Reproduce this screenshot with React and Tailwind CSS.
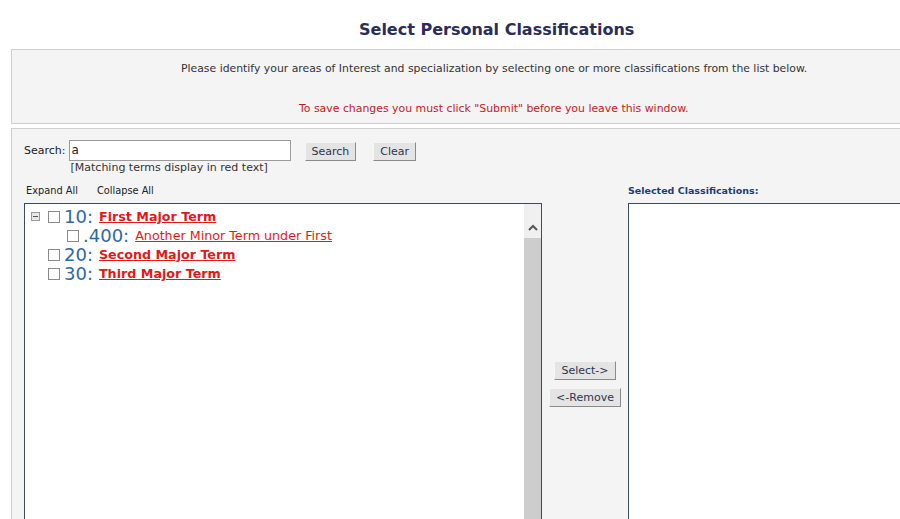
import React from "react";

const terms = [
  { code: "10:", label: "First Major Term", level: 0, toggle: true, bold: true },
  { code: ".400:", label: "Another Minor Term under First", level: 1, bold: false },
  { code: "20:", label: "Second Major Term", level: 0, bold: true },
  { code: "30:", label: "Third Major Term", level: 0, bold: true },
];

function Box() {
  return <span className="inline-block h-[12px] w-[12px] shrink-0 border border-[#8a8a8a] bg-white" />;
}

function OldButton({ children, className = "" }) {
  return (
    <button
      type="button"
      className={`h-[19px] whitespace-nowrap border border-t-[#f4f4f4] border-l-[#f4f4f4] border-r-[#8a8a8a] border-b-[#8a8a8a] bg-[#e4e4e4] px-[6px] text-[11px] leading-[17px] text-[#2d3550] ${className}`}
    >
      {children}
    </button>
  );
}

export default function App() {
  return (
    <div className="h-[519px] w-[900px] overflow-hidden bg-white font-['DejaVu_Sans',Verdana,sans-serif] text-[#222]">
      <h1 className="pt-[21px] pl-[359px] text-[16px] font-bold leading-[18px] text-[#2b2d57]">
        Select Personal Classifications
      </h1>

      <div className="ml-[11px] mt-[10px] h-[75px] w-[1000px] border border-[#cfcfcf] bg-[#f4f4f4]">
        <p className="pl-[169px] pt-[12px] text-[10.85px] leading-[13px] text-[#333]">
          Please identify your areas of Interest and specialization by selecting one or more classifications from the list below.
        </p>
        <p className="pl-[287px] pt-[27px] text-[10.9px] leading-[13px] text-[#c41a1a]">
          To save changes you must click "Submit" before you leave this window.
        </p>
      </div>

      <div className="ml-[11px] mt-[4px] h-[400px] w-[1000px] border border-[#cfcfcf] bg-[#f4f4f4] pl-[12px]">
        <div className="flex items-start pt-[11px]">
          <span className="pt-[4px] text-[11px] leading-[13px]">Search:</span>
          <div className="ml-[3px]">
            <div className="h-[21px] w-[222px] border border-[#9a9a9a] bg-white px-[2px] text-[12px] leading-[19px]">a</div>
            <div className="pl-[2px] text-[11px] leading-[13px] text-[#333]">[Matching terms display in red text]</div>
          </div>
          <OldButton className="ml-[14px] mt-[2px]">Search</OldButton>
          <OldButton className="ml-[17px] mt-[2px]">Clear</OldButton>
        </div>

        <div className="mt-[11px] flex">
          <div className="shrink-0">
            <div className="flex gap-[19px] pl-[2px] text-[9.8px] leading-[12px] text-[#222]">
              <span>Expand All</span>
              <span>Collapse All</span>
            </div>
            <div className="mt-[6px] flex h-[330px] w-[518px] border border-[#3d4b5f] bg-white">
              <div className="flex-1 pl-[6px] pt-[3px]">
                {terms.map((t) => (
                  <div
                    key={t.code}
                    className={`flex h-[19px] items-center whitespace-nowrap ${t.level ? "pl-[36px]" : "pl-[17px]"}`}
                  >
                    {t.toggle && (
                      <span className="-ml-[17px] mr-[8px] flex h-[9px] w-[9px] items-center justify-center border border-[#9a9a9a] bg-[#e8e8e8]">
                        <span className="h-[1px] w-[5px] bg-[#555]" />
                      </span>
                    )}
                    <Box />
                    <span className="ml-[4px] text-[18px] leading-[19px] text-[#2f67a8]">{t.code}</span>
                    <span
                      className={`ml-[6px] text-[12.7px] leading-[19px] text-[#e01a1a] underline ${t.bold ? "font-bold" : ""}`}
                    >
                      {t.label}
                    </span>
                  </div>
                ))}
              </div>
              <div className="flex w-[17px] flex-col bg-[#f0f0f0]">
                <div className="flex h-[34px] items-center justify-center pt-[12px]">
                  <svg width="10" height="7" viewBox="0 0 10 7">
                    <path d="M1 6 L5 2 L9 6" fill="none" stroke="#555" strokeWidth="2" />
                  </svg>
                </div>
                <div className="flex-1 bg-[#cdcdcd]" />
              </div>
            </div>
          </div>

          <div className="flex w-[86px] shrink-0 flex-col items-center pt-[176px]">
            <OldButton>Select-&gt;</OldButton>
            <OldButton className="mt-[8px]">&lt;-Remove</OldButton>
          </div>

          <div className="shrink-0">
            <div className="text-[9.5px] font-bold leading-[12px] text-[#1f3d73]">Selected Classifications:</div>
            <div className="mt-[6px] h-[330px] w-[400px] border border-[#3d4b5f] bg-white" />
          </div>
        </div>
      </div>
    </div>
  );
}
